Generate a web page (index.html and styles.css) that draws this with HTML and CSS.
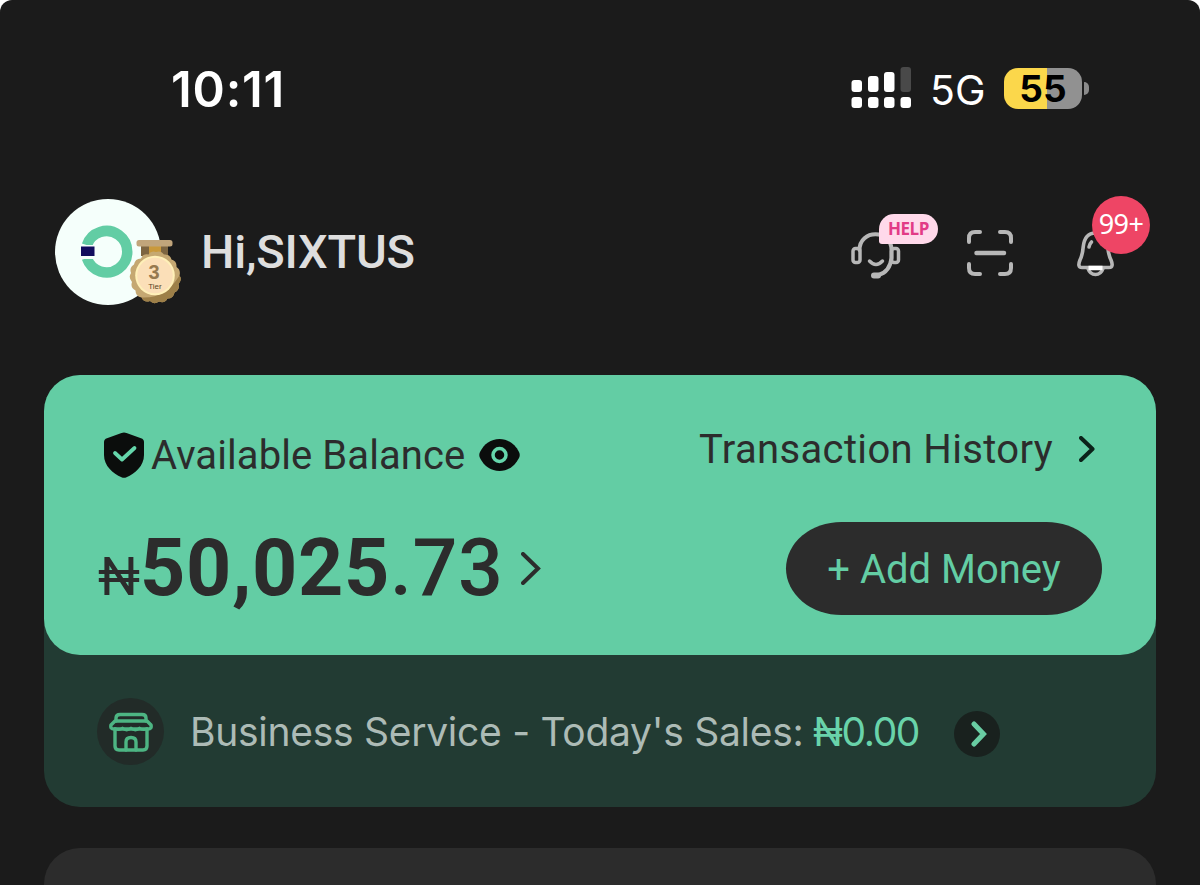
FILE: index.html
```html
<!DOCTYPE html>
<html lang="en">
<head>
    <meta charset="UTF-8">
    <meta name="viewport" content="width=device-width, initial-scale=1.0">
    <title>Wallet Home</title>
    <link rel="stylesheet" href="styles.css">
</head>
<body>
    <div class="screen">
        <div class="status-bar">
            <span class="time">10:11</span>
            <svg class="signal" width="60" height="42" viewBox="0 0 60 42">
                <g fill="#fff">
                    <rect x="0.5" y="13" width="10.5" height="12" rx="3"/>
                    <rect x="17" y="9" width="10.5" height="16" rx="3"/>
                    <rect x="33" y="5" width="10.5" height="20" rx="3"/>
                    <rect x="0.5" y="30" width="10.5" height="11" rx="3"/>
                    <rect x="17" y="30" width="10.5" height="11" rx="3"/>
                    <rect x="33" y="30" width="10.5" height="11" rx="3"/>
                    <rect x="49.5" y="30" width="10.5" height="11" rx="3"/>
                </g>
                <rect x="49.5" y="0" width="10.5" height="25" rx="3" fill="#494949"/>
            </svg>
            <span class="network">5G</span>
            <div class="battery">55</div>
            <div class="battery-tip"></div>
        </div>

        <div class="header">
            <div class="avatar">
                <svg width="128" height="108" viewBox="0 0 128 108">
                    <circle cx="53" cy="53" r="53" fill="#f5fffb"/>
                    <path d="M31.9 46.2A20.7 20.7 0 1 1 31.9 59.2" fill="none" stroke="#62cda4" stroke-width="10.5"/>
                    <path d="M26 46H40V60H26z" fill="#f5fffb"/>
                    <rect x="26" y="47.5" width="13.500" height="9.500" fill="#120d5e"/>
                    <rect x="86" y="45" width="27" height="12" fill="#7d6541"/>
                    <rect x="94" y="45" width="12" height="12" fill="#c9993c"/>
                    <rect x="81.500" y="41" width="36" height="6.500" rx="2.500" fill="#c1a57b"/>
                    <path d="M101 53 Q106 51 109 55.500 Q115 55 116.500 60.500 Q122 62 121.500 68 Q126 71 124.500 76.500 Q127.500 80.500 123.500 85 Q125 91 119.500 93.500 Q118.500 99.500 112.500 99.500 Q109.500 105 104 102.500 Q99 106 95 102 Q89 104 86.500 98.500 Q80.500 97.500 80.500 91.500 Q75 88.500 77 83 Q73 78.500 76 74 Q74 68.500 79 65.500 Q80 59.500 86 59.500 Q88 54 93.500 55.500 Q96 51.500 101 53z" fill="#c5a872"/>
                    <path d="M124.500 76.500 Q127.500 80.500 123.500 85 Q125 91 119.500 93.500 Q118.500 99.500 112.500 99.500 Q109.500 105 104 102.500 Q99 106 95 102 Q89 104 86.500 98.500 Q110 100 124.500 76.500z" fill="#9d7f48"/>
                    <circle cx="100" cy="76.500" r="19.800" fill="#fff0b8"/>
                    <circle cx="100" cy="76.500" r="17.800" fill="#fbdfb8"/>
                    <text class="tier-number" x="99" y="80" text-anchor="middle">3</text>
                    <text class="tier-label" x="100" y="90" text-anchor="middle">Tier</text>
                </svg>
            </div>
            <h1 class="greeting">Hi,SIXTUS</h1>

            <div class="support">
                <svg width="52" height="52" viewBox="0 0 52 52" fill="none" stroke="#b7b7b7" stroke-width="4" stroke-linecap="round">
                    <rect x="2" y="21.500" width="7" height="14" rx="2.500" stroke-width="3.500"/>
                    <rect x="40.500" y="21.500" width="7" height="14" rx="2.500" stroke-width="3.500"/>
                    <path d="M8.500 23C8.500 2 40.500 2 40.500 23V31C39.500 40 34.500 46 27.500 48"/>
                    <path d="M18.500 34Q25 41 31.500 34" stroke-width="3.500"/>
                    <path d="M23 48.500H27" stroke-width="6"/>
                </svg>
                <span class="help-badge">HELP</span>
            </div>
            <svg class="scan" width="46" height="46" viewBox="0 0 46 46" fill="none" stroke="#b7b7b7" stroke-width="4" stroke-linecap="round">
                <path d="M2 12V8Q2 2 8 2H13M33 2H38Q44 2 44 8V12M44 34V38Q44 44 38 44H33M13 44H8Q2 44 2 38V34"/>
                <path d="M9.500 23H37" stroke-width="4.500"/>
            </svg>
            <div class="notifications">
                <svg width="38" height="46" viewBox="0 0 38 46" fill="none" stroke="#b7b7b7" stroke-width="3.600" stroke-linejoin="round" stroke-linecap="round">
                    <path d="M18.500 2C10 2 7 8 6.200 16C5.700 22 5 25 3 29Q0 36.500 5 36.500H32Q37 36.500 34 29C32 25 31.300 22 30.800 16C30 8 27 2 18.500 2z"/>
                    <path d="M14.500 11Q12.500 13 12 16"/>
                    <path d="M11 37.500Q13 43.500 18.500 43.500Q24 43.500 26 37.500"/>
                    <path d="M11.500 37H25.500" stroke="#fff" stroke-linecap="butt" stroke-width="4.500"/>
                </svg>
                <span class="count-badge">99+</span>
            </div>
        </div>

        <div class="wallet">
            <div class="balance-card">
                <div class="balance">
                    <div class="balance-title">
                        <svg width="40" height="46" viewBox="0 0 40 46">
                            <path d="M17.500 1Q20 0 22.500 1L37 6.200Q40 7.200 40 10V23C40 34 31 41.500 22.500 45.200Q20 46.300 17.500 45.200C9 41.500 0 34 0 23V10Q0 7.200 3 6.200z" fill="#0b0d0c"/>
                            <path d="M11 21L18 27.500L30.500 16" fill="none" stroke="#65d6ab" stroke-width="3.800" stroke-linecap="round" stroke-linejoin="round"/>
                        </svg>
                        <span class="balance-label">Available Balance</span>
                        <svg width="41" height="32" viewBox="0 0 41 32">
                            <path d="M1 13C5 5 12 0 20.500 0S36 5 40 13Q41.500 16 40 19C36 27 29 32 20.500 32S5 27 1 19Q-.5 16 1 13z" fill="#0b0d0c"/>
                            <circle cx="20.500" cy="16" r="6.500" fill="none" stroke="#65d6ab" stroke-width="3.500"/>
                        </svg>
                    </div>
                    <div class="amount">
                        <span class="currency">₦</span>
                        <span class="value">50,025<span class="cents">.73</span></span>
                        <svg width="20" height="33" viewBox="0 0 20 33">
                            <path d="M2 2L17 16.500L2 31" fill="none" stroke="#2c2c2c" stroke-width="4" stroke-linecap="round"/>
                        </svg>
                    </div>
                </div>
                <div class="actions">
                    <div class="history">
                        <span>Transaction History</span>
                        <svg width="16" height="26" viewBox="0 0 16 26">
                            <path d="M2 2L13.500 13L2 24" fill="none" stroke="#0b2219" stroke-width="4" stroke-linecap="round" stroke-linejoin="round"/>
                        </svg>
                    </div>
                    <button class="add-money">+ Add Money</button>
                </div>
            </div>

            <div class="business">
                <div class="shop-icon">
                    <svg width="44" height="40" viewBox="0 0 44 40" fill="none" stroke="#4db583" stroke-width="3.400" stroke-linejoin="round" stroke-linecap="round">
                        <path d="M7 9V6Q7 2.500 11 2.500H33Q37 2.500 37 6V9"/>
                        <path d="M6 9H38L42 13Q43 17 39 17H5Q1 17 2 13z"/>
                        <path d="M6 16.500Q10 19 13.500 16Q17.500 20 22 16Q26.500 20 30.500 16Q34 19 38 16.500" stroke-width="2.800"/>
                        <path d="M6 18V34Q6 38 10 38H34Q38 38 38 34V18"/>
                        <path d="M17 38V30Q17 25.500 22 25.500Q27 25.500 27 30V38"/>
                    </svg>
                </div>
                <span class="business-text">Business Service - Today's Sales:</span>
                <span class="sales">₦0.00</span>
                <div class="arrow">
                    <svg width="16" height="26" viewBox="0 0 16 26">
                        <path d="M3 3L12.500 13L3 23" fill="none" stroke="#69cda3" stroke-width="5" stroke-linecap="round"/>
                    </svg>
                </div>
            </div>
        </div>

        <div class="next-card"></div>
    </div>
</body>
</html>
```
FILE: styles.css
```css
* {
    box-sizing: border-box;
}
body {
    margin: 0;
    background: #fff;
    font-family: Roboto, sans-serif;
}
.screen {
    width: 1200px;
    height: 885px;
    overflow: hidden;
    background: #1b1b1b;
    border-radius: 12px 12px 0 0;
    white-space: nowrap;
}
.status-bar {
    display: flex;
    align-items: center;
    height: 176px;
    padding-left: 171px;
    color: #fff;
    font-family: Inter, sans-serif;
}
.time {
    width: 680px;
    padding-top: 3px;
    font-size: 49px;
    font-weight: 600;
    letter-spacing: 0.8px;
}
.network {
    width: 93px;
    padding-top: 4px;
    padding-left: 19px;
    font-size: 41px;
}
.battery {
    width: 78px;
    height: 41px;
    border-radius: 14px;
    background: linear-gradient(90deg, #fbd74b 43px, #919191 43px);
    color: #000;
    font-size: 37px;
    font-weight: 700;
    line-height: 41px;
    text-align: center;
}
.battery-tip {
    width: 5px;
    height: 13px;
    margin-left: 2px;
    border-radius: 0 5px 5px 0;
    background: #8a8a8a;
}
.header {
    display: flex;
    align-items: center;
    height: 154px;
    padding-left: 55px;
}
.avatar {
    width: 128px;
    height: 108px;
}
.tier-number {
    font: bold 20px "Liberation Sans", sans-serif;
    fill: #96794f;
}
.tier-label {
    font: 8px "Liberation Sans", sans-serif;
    fill: #5b4526;
}
.greeting {
    width: 668px;
    margin: 0;
    padding: 0 0 4px 18px;
    color: #dedede;
    font-size: 47px;
    font-weight: 500;
    letter-spacing: -0.2px;
}
.support {
    position: relative;
    width: 116px;
    height: 52px;
}
.help-badge {
    position: absolute;
    left: 28px;
    top: -13px;
    width: 59px;
    height: 30px;
    border-radius: 15px 15px 15px 3px;
    background: #ffd9ea;
    color: #e23a86;
    font: bold 17px/30px "Open Sans", sans-serif;
    letter-spacing: -0.4px;
    text-align: center;
}
.notifications {
    position: relative;
    width: 38px;
    height: 46px;
    margin-left: 63px;
}
.notifications svg {
    display: block;
    margin: 1px 0 0 1px;
}
.count-badge {
    position: absolute;
    left: 16px;
    top: -34px;
    width: 58px;
    height: 58px;
    border-radius: 50%;
    background: #ee4565;
    color: #fff;
    font: 27px/56px "Noto Sans", sans-serif;
    letter-spacing: -0.6px;
    text-align: center;
}
.wallet {
    width: 1112px;
    height: 432px;
    margin: 45px 44px 0;
    border-radius: 36px;
    background: #223b33;
}
.balance-card {
    display: flex;
    justify-content: space-between;
    height: 280px;
    padding: 50px 54px 0 54px;
    border-radius: 36px;
    background: #63cda4;
    color: #2c2c2c;
}
.balance-title {
    display: flex;
    align-items: center;
    height: 60px;
    padding-left: 6px;
    font-size: 40px;
}
.balance-label {
    width: 335px;
    padding-left: 7px;
    letter-spacing: 0.08px;
}
.amount {
    display: flex;
    align-items: baseline;
    margin-top: 37px;
}
.amount svg {
    align-self: center;
}
.currency {
    width: 42px;
    font-size: 53px;
}
.value {
    width: 381px;
    font-size: 79px;
    font-weight: 700;
    letter-spacing: 0.65px;
}
.cents {
    font-weight: 500;
}
.history {
    display: flex;
    align-items: center;
    gap: 26px;
    height: 48px;
    padding-right: 7px;
    font-size: 40px;
    letter-spacing: 0.35px;
}
.actions {
    display: flex;
    flex-direction: column;
    align-items: flex-end;
}
.add-money {
    width: 316px;
    height: 93px;
    margin-top: 49px;
    padding-top: 3px;
    border: none;
    border-radius: 56px / 47px;
    background: #2c2c2c;
    color: #63cda4;
    font-family: Roboto, sans-serif;
    font-size: 40px;
    cursor: pointer;
}
.business {
    display: flex;
    align-items: center;
    height: 152px;
    padding-left: 53px;
    color: #adbbb6;
    font-family: Inter, sans-serif;
    font-size: 39px;
}
.shop-icon {
    display: flex;
    align-items: center;
    justify-content: center;
    width: 67px;
    height: 67px;
    margin-top: 1px;
    border-radius: 50%;
    background: #222b28;
}
.business-text {
    width: 649px;
    padding-top: 1px;
    padding-left: 26px;
    letter-spacing: -0.28px;
}
.sales {
    width: 141px;
    padding-top: 1px;
    color: #69d3aa;
    letter-spacing: -1.4px;
}
.arrow {
    display: flex;
    align-items: center;
    justify-content: center;
    width: 46px;
    height: 46px;
    margin-top: 6px;
    padding-left: 3px;
    border-radius: 50%;
    background: #19211e;
}
.next-card {
    height: 120px;
    margin: 41px 44px 0;
    border-radius: 36px;
    background: #2c2c2c;
}
```
